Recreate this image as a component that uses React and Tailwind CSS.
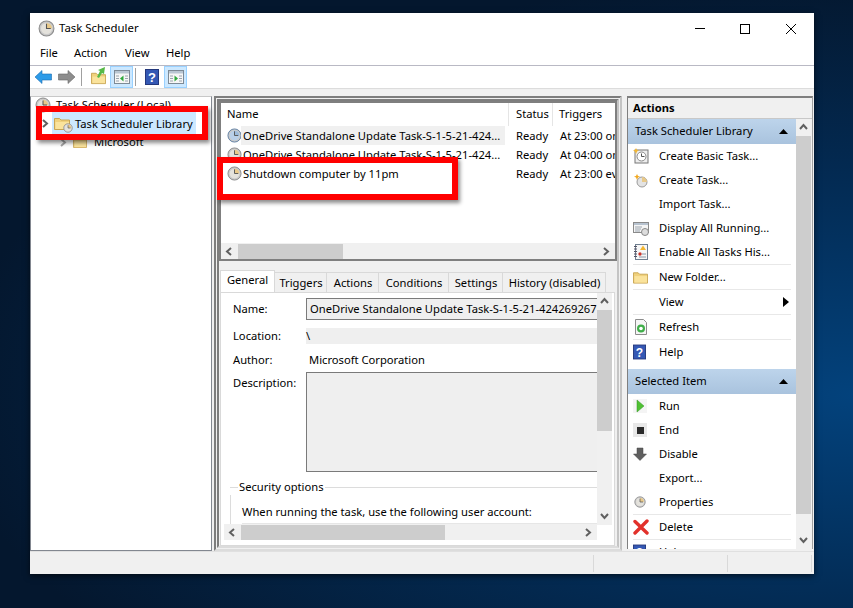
import { Fragment } from "react";

const Clock = ({ size = 16, face = "#e4e2dc", rim = "#8b8b8b", wedge = "#e8c98a", className = "" }) => (
  <svg width={size} height={size} viewBox="0 0 16 16" className={`shrink-0 ${className}`}>
    <circle cx="8" cy="8" r="7" fill="#c9c9c9" stroke={rim} />
    <circle cx="8" cy="8" r="5.2" fill={face} />
    <path d="M8 8V2.8A5.2 5.2 0 0 1 13.2 8Z" fill={wedge} />
    <path d="M8 3.5V8H12" fill="none" stroke="#555" strokeWidth="1" />
  </svg>
);

const Folder = ({ w = 16, h = 14 }) => (
  <svg width={w} height={h} viewBox="0 0 16 14" className="shrink-0">
    <path d="M.5 2.5h5l1.5 1.5h8.5v9.5H.5Z" fill="#f0d17c" stroke="#c9a553" />
    <path d="M1.5 6h13.5v7H1.5Z" fill="#fae39c" />
  </svg>
);

const Chevron = ({ dir = "left", color = "#606060" }) => {
  const paths = {
    left: "M6 1 2 4.5 6 8",
    right: "M2 1 6 4.5 2 8",
    up: "M1 6 4.5 2 8 6",
    down: "M1 2 4.5 6 8 2",
  };
  return (
    <svg width="9" height="9" viewBox="0 0 9 9" className="shrink-0">
      <path d={paths[dir]} fill="none" stroke={color} strokeWidth="2" />
    </svg>
  );
};

const HelpIcon = ({ w = 14, h = 16 }) => (
  <svg width={w} height={h} viewBox="0 0 14 16" className="shrink-0">
    <rect x=".5" y=".5" width="13" height="15" fill="#3458b4" stroke="#23377c" />
    <text x="7" y="13" textAnchor="middle" fontSize="13" fontWeight="700" fill="#fff" fontFamily="Liberation Sans, sans-serif">?</text>
  </svg>
);

const PaneIcon = ({ arrow, side }) => (
  <svg width="16" height="14" viewBox="0 0 16 14">
    <rect x=".5" y=".5" width="15" height="13" fill="#f6f6f6" stroke="#7d8a96" />
    <rect x="1" y="1" width="14" height="2.5" fill="#b9c6d2" />
    <path d="M2 6h3M2 8.5h3M2 11h3M11 6h3M11 8.5h3M11 11h3" stroke="#9aa4ae" />
    <path d={side === "left" ? "M9.5 5.5v6L6 8.5Z" : "M6.5 5.5v6L10 8.5Z"} fill={arrow} />
  </svg>
);

const ToolButton = ({ children }) => (
  <div className="w-[23px] h-[22px] flex items-center justify-center bg-[#cce8ff] border border-[#99d1ff]">{children}</div>
);

const ScrollH = ({ thumbWidth, className = "" }) => (
  <div className={`h-[16px] flex items-center bg-[#f0f0f0] shrink-0 ${className}`}>
    <div className="w-[17px] flex justify-center"><Chevron dir="left" /></div>
    <div className="h-[15px] bg-[#cdcdcd]" style={{ width: thumbWidth }} />
    <div className="flex-1" />
    <div className="w-[17px] flex justify-center"><Chevron dir="right" /></div>
  </div>
);

const ScrollV = ({ thumbTop, thumbHeight, className = "" }) => (
  <div className={`w-[15px] bg-[#f0f0f0] flex flex-col items-center shrink-0 ${className}`}>
    <div className="h-[17px] flex items-center"><Chevron dir="up" /></div>
    <div className="w-full bg-[#cdcdcd]" style={{ height: thumbHeight, marginTop: thumbTop }} />
    <div className="flex-1" />
    <div className="h-[17px] flex items-center"><Chevron dir="down" /></div>
  </div>
);

const icons = {
  basic: (
    <svg width="16" height="16" viewBox="0 0 16 16">
      <rect x="2" y="2" width="13" height="13" fill="#eee" stroke="#777" />
      <circle cx="8.5" cy="8.5" r="4.5" fill="#fff" stroke="#888" />
      <path d="M8.5 5.5v3h3" fill="none" stroke="#555" />
      <path d="M3 0l1 2 2 .5-2 1L3 6 2 3.500 0 2.500 2 2Z" fill="#f2b632" />
    </svg>
  ),
  create: (
    <svg width="16" height="16" viewBox="0 0 16 16">
      <circle cx="9" cy="10" r="5" fill="#e3e3e3" stroke="#9a9a9a" />
      <path d="M9 10V5a5 5 0 0 1 5 5Z" fill="#e8c98a" />
      <path d="M4 2l1 2 2 .5-2 1L4 8 3 5.500 1 4.500 3 4Z" fill="#f2a81e" />
    </svg>
  ),
  running: (
    <svg width="16" height="16" viewBox="0 0 16 16">
      <rect x=".5" y="2.500" width="15" height="10" fill="#f5f5f5" stroke="#8a8a8a" />
      <rect x="1" y="3" width="14" height="2" fill="#b7c3d0" />
      <path d="M2 7h7M2 9h6M2 11h5" stroke="#9aa4ae" />
      <circle cx="12" cy="12" r="3.500" fill="#ddd" stroke="#888" />
    </svg>
  ),
  history: (
    <svg width="16" height="16" viewBox="0 0 16 16">
      <rect x="2.500" y=".5" width="12" height="15" fill="#f7f7f7" stroke="#6f7f90" />
      <path d="M1 2.500h3M1 5h3M1 7.500h3M1 10h3M1 12.500h3" stroke="#556" />
      <path d="M10 1.500l3 4.500H7Z" fill="#f2b632" />
      <circle cx="7" cy="10" r="1.700" fill="#c9352b" />
      <path d="M9 10h4M6 13h7" stroke="#8a97a5" />
    </svg>
  ),
  folder: <Folder w={15} h={14} />,
  refresh: (
    <svg width="16" height="16" viewBox="0 0 16 16">
      <path d="M2.500.5h8l3 3v12h-11Z" fill="#f6f6f6" stroke="#8c8c8c" />
      <circle cx="8" cy="9.500" r="4" fill="#3fae49" />
      <circle cx="8" cy="9.500" r="1.800" fill="#fff" />
    </svg>
  ),
  help: <HelpIcon w={13} h={16} />,
  run: (
    <svg width="14" height="14" viewBox="0 0 14 14">
      <rect width="14" height="14" fill="#f4f4f4" />
      <path d="M4 1v12l7-6Z" fill="#4fc132" stroke="#35942a" strokeWidth=".5" />
    </svg>
  ),
  end: (
    <svg width="14" height="14" viewBox="0 0 14 14">
      <rect width="14" height="14" fill="#e8e8e8" />
      <rect x="4" y="4" width="7" height="7" fill="#2a2a2a" />
    </svg>
  ),
  disable: (
    <svg width="14" height="14" viewBox="0 0 14 14">
      <path d="M4 1h6v6h3.500L7 13.500.5 7H4Z" fill="#5f5f5f" stroke="#444" strokeWidth=".5" />
    </svg>
  ),
  properties: <div className="pl-[1px]"><Clock size={12} /></div>,
  delete: (
    <svg width="16" height="16" viewBox="0 0 16 16">
      <path d="M2 2.500 14 14M14 2 2 14" stroke="#e2312b" strokeWidth="3.400" strokeLinecap="round" />
    </svg>
  ),
};

const setOne = [
  { label: "Create Basic Task...", icon: "basic" },
  { label: "Create Task...", icon: "create" },
  { label: "Import Task..." },
  { label: "Display All Running...", icon: "running" },
  { label: "Enable All Tasks His...", icon: "history", line: true },
  { label: "New Folder...", icon: "folder", line: true },
  { label: "View", arrow: true, line: true },
  { label: "Refresh", icon: "refresh", line: true },
  { label: "Help", icon: "help" },
];

const setTwo = [
  { label: "Run", icon: "run" },
  { label: "End", icon: "end" },
  { label: "Disable", icon: "disable" },
  { label: "Export..." },
  { label: "Properties", icon: "properties", line: true },
  { label: "Delete", icon: "delete", line: true },
  { label: "Help", icon: "help" },
];

const ActionRow = ({ item }) => (
  <Fragment>
    <div className="h-[24px] flex items-center shrink-0">
      <div className="w-[31px] pl-[5px] flex items-center justify-start">{item.icon && icons[item.icon]}</div>
      <span className="flex-1">{item.label}</span>
      {item.arrow && (
        <svg width="6" height="10" viewBox="0 0 6 10" className="mr-[7px]"><path d="M0 0l6 5-6 5Z" fill="#000" /></svg>
      )}
    </div>
    {item.line && <div className="h-px bg-[#e8e8e8] ml-[5px] mr-[5px] shrink-0" />}
  </Fragment>
);

const SectionHead = ({ title }) => (
  <div className="h-[25px] shrink-0 flex items-center justify-between pl-[7px] pr-[8px] bg-[linear-gradient(#bdd4eb,#a9c3de)]">
    <span>{title}</span>
    <svg width="9" height="5" viewBox="0 0 9 5"><path d="M4.500 0 9 5H0Z" fill="#000" /></svg>
  </div>
);

const tabs = [
  { label: "Triggers", w: "w-[52px]" },
  { label: "Actions", w: "w-[52px]" },
  { label: "Conditions", w: "w-[70px]" },
  { label: "Settings", w: "w-[54px]" },
  { label: "History (disabled)", w: "w-[103px]" },
];

const tasks = [
  { name: "OneDrive Standalone Update Task-S-1-5-21-424...", trigger: "At 23:00 on", blue: true },
  { name: "OneDrive Standalone Update Task-S-1-5-21-424...", trigger: "At 04:00 on" },
  { name: "Shutdown computer by 11pm", trigger: "At 23:00 every" },
];

export default function App() {
  return (
    <div className="w-[853px] h-[608px] overflow-hidden pl-[30px] pt-[13px] bg-[radial-gradient(ellipse_at_100%_65%,#03427c_0%,#032a52_40%,#04172e_75%)] font-['Noto_Sans',sans-serif] text-[11.2px] text-black">
      <div className="relative w-[784px] h-[561px] flex flex-col bg-[#f0f0f0] shadow-[0_2px_6px_rgba(0,0,0,0.6)]">
        {/* title bar */}
        <div className="h-[31px] bg-white flex items-center pl-[8px] shrink-0">
          <Clock size={17} />
          <span className="ml-[4px] text-[11.4px] pb-[2px]">Task Scheduler</span>
          <div className="flex-1" />
          <div className="w-[10px] h-px bg-black mr-[35px]" />
          <div className="w-[10px] h-[10px] border border-black mr-[36px]" />
          <svg width="10" height="10" viewBox="0 0 10 10" className="mr-[18px]"><path d="M0 0l10 10M10 0 0 10" stroke="#000" /></svg>
        </div>
        {/* menu */}
        <div className="h-[22px] bg-white border-b border-[#b9b9c4] flex items-center shrink-0 pb-[3px] pl-[10px]">
          <span className="w-[34px]">File</span>
          <span className="w-[51px]">Action</span>
          <span className="w-[41px]">View</span>
          <span>Help</span>
        </div>
        {/* toolbar */}
        <div className="h-[23px] bg-white border-b border-[#dcdcdc] flex items-center shrink-0 pl-[5px]">
          <svg width="17" height="14" viewBox="0 0 17 14"><path d="M0 7l7-6.500V4h9.500v6H7v3.500Z" fill="#2d9be8" stroke="#1b6cb0" strokeWidth=".6" /></svg>
          <svg width="17" height="14" viewBox="0 0 17 14" className="ml-[6px]"><path d="M17 7l-7-6.500V4H.5v6H10v3.500Z" fill="#8d8d8d" stroke="#666" strokeWidth=".6" /></svg>
          <div className="w-px h-[18px] bg-[#a0a0a0] ml-[6px]" />
          <div className="ml-[9px] relative">
            <Folder w={15} h={15} />
            <svg width="10" height="11" viewBox="0 0 10 11" className="absolute left-[5px] top-[-3px]"><path d="M1 10 4 4 2 3l7-3-1 7-2-1-3 5Z" fill="#57b947" /></svg>
          </div>
          <div className="ml-[4px]"><ToolButton><PaneIcon arrow="#2fa83c" side="left" /></ToolButton></div>
          <div className="w-px h-[18px] bg-[#a0a0a0] ml-[2px]" />
          <div className="ml-[9px]"><HelpIcon /></div>
          <div className="ml-[5px]"><ToolButton><PaneIcon arrow="#2fa83c" side="right" /></ToolButton></div>
        </div>

        <div className="flex-1 flex min-h-0 pt-[7px]">
          {/* tree */}
          <div className="w-[182px] shrink-0 bg-white border border-[#828790] border-t-[#c8c8c8] flex flex-col">
            <div className="h-[15px] flex items-center pl-[4px] leading-none">
              <Clock size={16} />
              <span className="ml-[5px] pt-[1px]">Task Scheduler (Local)</span>
            </div>
            <div className="h-[22px] flex items-center pl-[10px]">
              <Chevron dir="right" color="#606060" />
              <div className="ml-[2px] w-[144px] h-full bg-[#cce8ff] flex items-center pl-[2px]">
                <div className="relative">
                  <Folder />
                  <div className="absolute right-[-3px] bottom-[-3px]"><Clock size={10} /></div>
                </div>
                <span className="ml-[5px] pt-[2px]">Task Scheduler Library</span>
              </div>
            </div>
            <div className="h-[16px] flex items-center pl-[28px]">
              <Chevron dir="right" color="#a6a6a6" />
              <div className="ml-[5px]"><Folder w={14} h={12} /></div>
              <span className="ml-[7px]">Microsoft</span>
            </div>
          </div>

          {/* centre */}
          <div className="ml-[2px] w-[408px] shrink-0 flex flex-col border-[5px] border-double border-[#7d7d7d] border-r-[#c4c4c4] border-b-[#dcdcdc]">
            <div className="h-[160px] shrink-0 bg-white border-2 border-[#7f7f7f] flex flex-col overflow-hidden">
              <div className="h-[23px] flex items-center shrink-0">
                <div className="w-[288px] shrink-0 h-full pl-[6px] flex items-center border-r border-[#e5e5e5]">Name</div>
                <div className="w-[44px] shrink-0 h-full pl-[7px] flex items-center border-r border-[#e5e5e5]">Status</div>
                <div className="pl-[6px]">Triggers</div>
              </div>
              {tasks.map((t) => (
                <div key={t.name + t.trigger} className="h-[19px] flex items-center shrink-0 whitespace-nowrap">
                  <div className="w-[288px] shrink-0 flex items-center pl-[6px]">
                    <Clock size={15} face={t.blue ? "#b9cfe8" : "#e4e2dc"} rim={t.blue ? "#5f7fa3" : "#8b8b8b"} wedge={t.blue ? "#9dbbdc" : "#e8c98a"} />
                    <span className={`-ml-[1px] h-[19px] w-[264px] pl-[2px] pt-[2px] flex items-center ${t.blue ? "bg-[#f0f0f0]" : ""}`}>{t.name}</span>
                  </div>
                  <div className="w-[44px] shrink-0 pl-[7px] pt-[2px]">Ready</div>
                  <div className="pl-[7px] pt-[2px] overflow-hidden flex-1">{t.trigger}</div>
                </div>
              ))}
              <div className="flex-1" />
              <ScrollH thumbWidth={105} />
            </div>

            <div className="flex-1 min-h-0 mt-[6px] pt-[3px] pl-[1px] pr-[2px] flex flex-col">
              <div className="h-[22px] flex items-end shrink-0">
                <div className="w-[55px] h-[22px] pb-[2px] bg-white flex items-center justify-center border border-b-0 border-[#d9d9d9]">General</div>
                {tabs.map((t) => (
                  <div key={t.label} className={`${t.w} h-[20px] pt-[1px] pl-[1px] bg-[#f0f0f0] flex items-center justify-center border border-l-0 border-b-0 border-[#d9d9d9]`}>{t.label}</div>
                ))}
              </div>
              <div className="flex-1 min-h-0 bg-white border border-[#d9d9d9] flex pl-[3px] pr-[2px] pb-[5px]">
                <div className="flex-1 min-w-0 flex flex-col">
                  <div className="flex-1 min-h-0 overflow-hidden pl-[9px] pt-[5px]">
                    <div className="flex h-[22px] items-center">
                      <span className="w-[73px] shrink-0">Name:</span>
                      <div className="flex-1 min-w-0 h-full flex items-center pl-[3px] bg-[#efefef] border border-r-0 border-[#7a7a7a] whitespace-nowrap overflow-hidden">OneDrive Standalone Update Task-S-1-5-21-424269267</div>
                    </div>
                    <div className="flex h-[16px] mt-[8px] items-center">
                      <span className="w-[73px] shrink-0 pt-[1px]">Location:</span>
                      <div className="flex-1 h-full bg-[#efefef] flex items-center pt-[1px]">\</div>
                    </div>
                    <div className="flex h-[16px] mt-[8px] items-center">
                      <span className="w-[76px] shrink-0">Author:</span>
                      <span>Microsoft Corporation</span>
                    </div>
                    <div className="flex h-[100px] mt-[4px]">
                      <span className="w-[73px] shrink-0 mt-[3px]">Description:</span>
                      <div className="flex-1 bg-[#efefef] border border-r-0 border-[#7a7a7a]" />
                    </div>
                    <div className="flex items-center h-[16px] mt-[7px] -ml-[3px]">
                      <div className="w-[8px] border-t border-[#dcdcdc]" />
                      <span className="px-[1px]">Security options</span>
                      <div className="flex-1 border-t border-[#dcdcdc]" />
                    </div>
                    <div className="-ml-[3px] border-l border-[#dcdcdc] pl-[11px] pt-[9px] h-[36px]">
                      <div className="border-b border-[#e6e6e6] pb-[2px]">When running the task, use the following user account:</div>
                    </div>
                  </div>
                  <ScrollH thumbWidth={204} />
                </div>
                <ScrollV thumbHeight={121} thumbTop={0} className="h-[232px]" />
              </div>
            </div>
          </div>

          {/* actions */}
          <div className="ml-[5px] w-[186px] h-[453px] shrink-0 flex flex-col border-l border-t-2 border-r border-[#7f7f7f] border-r-[#a0a0a0]">
            <div className="h-[21px] shrink-0 flex items-center pl-[5px] font-bold border-b border-[#c8c8c8]">Actions</div>
            <div className="flex-1 min-h-0 flex">
              <div className="w-[168px] min-w-0 bg-white flex flex-col overflow-hidden">
                <SectionHead title="Task Scheduler Library" />
                {setOne.map((item) => <ActionRow key={item.label} item={item} />)}
                <div className="h-[5px] shrink-0" />
                <SectionHead title="Selected Item" />
                {setTwo.map((item) => <ActionRow key={item.label} item={item} />)}
              </div>
              <ScrollV thumbHeight={378} thumbTop={0} />
            </div>
          </div>
        </div>

        {/* status bar */}
        <div className="h-[23px] shrink-0 flex items-center border-t border-[#e0e0e0] text-[11px]">
          <div className="w-[563px]" />
          <div className="w-[134px] h-[17px] border-l border-[#d9d9d9]" />
          <div className="w-[84px] h-[17px] border-l border-[#d9d9d9]" />
          <div className="h-[17px] border-l border-[#d9d9d9]" />
        </div>

        {/* red highlights drawn over the screenshot */}
        <div className="absolute left-[6px] top-[93px] w-[172px] h-[34px] border-[6px] border-[#ff0000] shadow-[2px_3px_4px_rgba(0,0,0,0.45)]" />
        <div className="absolute left-[187px] top-[144px] w-[241px] h-[43px] border-[6px] border-[#ff0000] shadow-[2px_3px_4px_rgba(0,0,0,0.45)]" />
      </div>
    </div>
  );
}
